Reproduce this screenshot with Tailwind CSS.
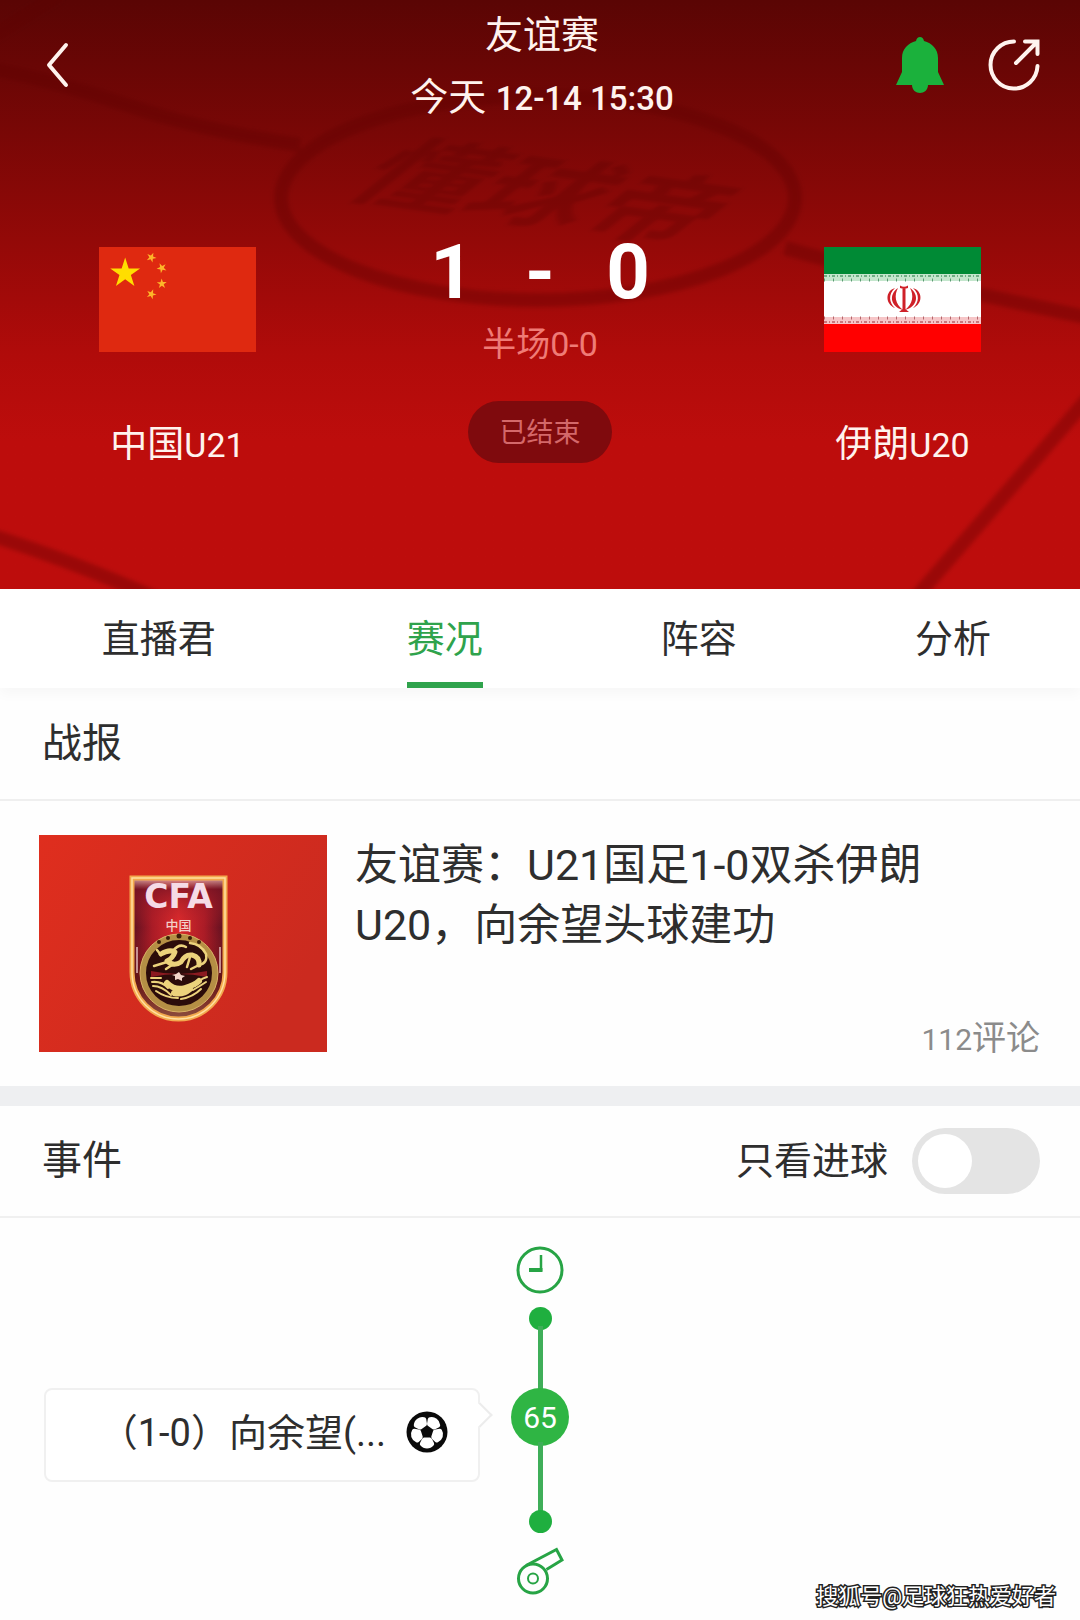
<!DOCTYPE html>
<html lang="zh-CN">
<head>
  <meta charset="UTF-8">
  <meta name="viewport" content="width=device-width, initial-scale=1.0">
  <title>友谊赛 中国U21 1-0 伊朗U20</title>
  <script src="https://cdn.jsdelivr.net/npm/@tailwindcss/browser@4"></script>
</head>
<body class="relative min-h-screen bg-[#fefefe] text-[#2e2e2e] font-[Roboto,'Noto_Sans_CJK_SC',sans-serif]">

  <header class="relative overflow-hidden bg-linear-to-b from-[#5a0504] via-[#b00b0a] via-60% to-[#bd0d0c] to-75% text-[#fff3ee] pb-[117px]">
    <!-- pitch lines -->
    <svg class="absolute inset-0 w-full h-full" viewBox="0 0 1080 589" preserveAspectRatio="none" aria-hidden="true">
      <defs>
        <filter id="soft"><feGaussianBlur stdDeviation="2"/></filter>
      </defs>
      <g fill="none" stroke="#5c0808" stroke-opacity=".36" stroke-width="14" filter="url(#soft)">
        <path d="M-10 38L60 -6" stroke-opacity=".25"/>
        <path d="M-10 68Q60 82 130 106T300 145"/>
        <ellipse cx="538" cy="198" rx="257" ry="102"/>
        <path d="M785 248C860 270 960 290 1090 318"/>
        <path d="M-10 535Q70 560 160 600"/>
        <path d="M1090 396L912 602"/>
      </g>
      <text transform="matrix(1 .14 -.75 .6 340 194)" font-size="116" font-weight="700" fill="#4d0707" fill-opacity=".25" filter="url(#soft)">懂球帝</text>
    </svg>

    <nav class="relative h-32 grid grid-cols-[1fr_auto_1fr] items-center pl-11 pr-10">
      <button type="button" aria-label="返回" class="justify-self-start">
        <svg class="w-7 h-12" viewBox="0 0 28 48" fill="none" stroke="currentColor" stroke-width="4" stroke-linecap="round" stroke-linejoin="round"><path d="M22 4L5 24L22 44"/></svg>
      </button>
      <div class="pt-1 text-center text-[38px] leading-[62px]">
        <h1>友谊赛</h1>
        <p>今天 <span class="text-[33px] font-medium">12-14 15:30</span></p>
      </div>
      <div class="justify-self-end flex items-center gap-11">
        <button type="button" aria-label="提醒" class="text-[#1bb13c]">
          <svg class="w-12 h-14" viewBox="0 0 48 56" fill="currentColor"><path d="M24 0c2 0 3.500 1.500 4 4c8 2 14 8 14 17v14l6 13H32c0 5-4 8-8 8s-8-3-8-8H0l6-13V21C6 12 12 6 20 4c.5-2.500 2-4 4-4z"/></svg>
        </button>
        <button type="button" aria-label="分享">
          <svg class="w-[52px] h-[52px]" viewBox="0 0 52 52" fill="none" stroke="currentColor" stroke-width="4" stroke-linecap="round"><path d="M26 2.500A23.500 23.500 0 1 0 49.500 27"/><path d="M28 24L49 3M37 2.500H49.500V15"/></svg>
        </button>
      </div>
    </nav>

    <section class="relative grid grid-cols-[1fr_370px_1fr] pt-[119px]">
      <div class="flex flex-col items-center gap-[66px]">
        <svg class="w-[157px] h-[105px]" viewBox="0 0 30 20" preserveAspectRatio="none" role="img" aria-label="中国">
          <defs><path id="star" d="M0 -1L.2245 -.309L.951 -.309L.363 .118L.588 .809L0 .382L-.588 .809L-.363 .118L-.951 -.309L-.2245 -.309Z"/></defs>
          <path fill="#df2910" d="M0 0h30v20H0z"/>
          <g fill="#ffde00">
            <use href="#star" transform="translate(5 5) scale(3)"/>
            <g fill="#fdb62a">
              <use href="#star" transform="translate(10 2) rotate(23)"/>
              <use href="#star" transform="translate(12 4) rotate(46)"/>
              <use href="#star" transform="translate(12 7) rotate(70)"/>
              <use href="#star" transform="translate(10 9) rotate(21)"/>
            </g>
          </g>
        </svg>
        <h2 class="text-[37px] leading-[54px]">中国<span class="text-[34px]">U21</span></h2>
      </div>

      <div class="flex flex-col items-center">
        <p class="flex justify-center items-center text-[76px] leading-[50px] font-bold text-white text-center">
          <span class="w-[88px]">1</span><span class="w-[88px]">-</span><span class="w-[88px]">0</span>
        </p>
        <p class="mt-[22px] text-[34px] leading-[50px] text-[#ef7b76]">半场0-0</p>
        <p class="mt-8 w-36 h-[62px] rounded-full bg-[#7f0a0d] text-[27px] leading-[64px] text-center text-[#d4686a]">已结束</p>
      </div>

      <div class="flex flex-col items-center gap-[66px]">
        <svg class="w-[157px] h-[105px]" viewBox="0 0 157 105" role="img" aria-label="伊朗">
          <path fill="#008a35" d="M0 0h157v28H0z"/>
          <path fill="#fff" d="M0 28h157v49H0z"/>
          <path fill="#f00" d="M0 77h157v28H0z"/>
          <path fill="#c4e6cd" d="M0 27h157v7H0z"/>
          <path fill="#f6c6c8" d="M0 70h157v7H0z"/>
          <g fill="none">
            <path stroke="#6fae84" stroke-width="2" stroke-dasharray="3 2 1 2" d="M0 29h157"/>
            <path stroke="#5b9a72" stroke-width="3" stroke-dasharray="1 8" d="M0 33h157"/>
            <path stroke="#c9777c" stroke-width="2" stroke-dasharray="3 2 1 2" d="M0 75h157"/>
            <path stroke="#b5666b" stroke-width="3" stroke-dasharray="1 8" d="M0 71h157"/>
          </g>
          <g fill="#cf2028">
            <path d="M78.500 41h3v22h-3zM76 38.500q4 2.500 8 0v2.500q-4 1.500-8 0zM75 65l5-4l5 4z"/>
            <path d="M74 41c-4 7-3 16 5 22c-12-3-15-15-5-22zM86 41c4 7 3 16-5 22c12-3 15-15 5-22z"/>
            <path d="M71 41c-7 6-6 15 0 20c-10-4-10-17 0-20zM89 41c7 6 6 15 0 20c10-4 10-17 0-20z"/>
          </g>
        </svg>
        <h2 class="text-[37px] leading-[54px]">伊朗<span class="text-[34px]">U20</span></h2>
      </div>
    </section>
  </header>

  <nav class="grid grid-cols-[5fr_4fr_4fr_4fr] justify-items-center bg-white text-[38px] leading-[56px] shadow-[0_6px_12px_rgba(0,0,0,0.03)]">
    <a href="#live" class="pt-[22px] pb-[15px] border-b-6 border-transparent">直播君</a>
    <a href="#match" aria-current="page" class="pt-[22px] pb-[15px] border-b-6 border-[#2fa34c] text-[#2fa34c]">赛况</a>
    <a href="#lineup" class="pt-[22px] pb-[15px] border-b-6 border-transparent">阵容</a>
    <a href="#analysis" class="pt-[22px] pb-[15px] border-b-6 border-transparent">分析</a>
  </nav>

  <main>
    <section>
      <h2 class="px-[42px] pt-[27px] pb-[26px] text-[40px] leading-[58px] border-b-2 border-[#efefef]">战报</h2>
      <a href="#report" class="flex gap-7 pl-[39px] pr-10 pt-[34px] pb-[34px]">
        <svg class="w-[288px] h-[217px] shrink-0" viewBox="0 0 288 217" role="img" aria-label="CFA 中国">
          <defs>
            <linearGradient id="bg" x1="0" x2="1" y2=".5"><stop offset="0" stop-color="#df2e1e"/><stop offset="1" stop-color="#cb2a1f"/></linearGradient>
            <linearGradient id="shield" x1="0" x2="1">
              <stop offset="0" stop-color="#5a1020"/><stop offset=".22" stop-color="#a91b26"/><stop offset=".5" stop-color="#dc2a2c"/><stop offset=".78" stop-color="#a91b26"/><stop offset="1" stop-color="#5a1020"/>
            </linearGradient>
            <linearGradient id="shade" x1="0" x2="0" y1="0" y2="1">
              <stop offset="0" stop-color="#f3c7c0" stop-opacity=".8"/><stop offset=".08" stop-color="#7a1424" stop-opacity=".7"/><stop offset=".35" stop-color="#c4242a" stop-opacity="0"/><stop offset=".7" stop-color="#5a140c" stop-opacity=".5"/><stop offset="1" stop-color="#8a5040"/>
            </linearGradient>
          </defs>
          <path fill="url(#bg)" d="M0 0h288v217H0z"/>
          <path fill="url(#shield)" d="M93 43h93v94a46.500 47 0 0 1-93 0z"/>
          <path fill="url(#shade)" stroke="#f3a94e" stroke-width="5" d="M93 43h93v94a46.500 47 0 0 1-93 0z"/>
          <path fill="none" stroke="#ffe0a0" stroke-width="1.500" d="M93 43h93v94a46.500 47 0 0 1-93 0z"/>
          <path fill="none" stroke="#e9c6c6" stroke-opacity=".7" stroke-width="2" d="M98 112v26M181 112v26"/>
          <text x="139.500" y="73" text-anchor="middle" font-family="DejaVu Sans, sans-serif" font-size="33" font-weight="700" fill="#f5dbe6">CFA</text>
          <text x="139.500" y="95" text-anchor="middle" font-size="13" font-weight="500" fill="#f3cfc8">中国</text>
          <circle cx="140" cy="138" r="36" fill="#2c0c0a" stroke="#b58f45" stroke-width="6"/>
          <circle cx="140" cy="138" r="39" fill="none" stroke="#d9b266" stroke-width="1"/>
          <g fill="#3a1c08"><circle cx="120" cy="107" r="2"/><circle cx="129" cy="103" r="2"/><circle cx="140" cy="101" r="2.500"/><circle cx="151" cy="103" r="2"/><circle cx="160" cy="107" r="2"/></g>
          <path fill="#8b1a20" d="M112 136q28 6 56 0v6q-28-6-56 0z"/>
          <!-- dragon -->
          <g fill="none" stroke="#ecd27c" stroke-linecap="round" stroke-linejoin="round">
            <path stroke-width="5" d="M122 119q8-5 14-2q-2 6-8 9q7 6 14 1q4-8 11-7q8 2 7 10"/>
            <path stroke-width="2.500" d="M160 130q9-2 7-11q-5-10-16-11M122 120l-4-5M128 127l-13 4M133 130l-6 4M151 122l-3 10M160 130l-8 4M134 116q6-8 13-4"/>
          </g>
          <!-- phoenix -->
          <g fill="none" stroke="#ecd27c" stroke-linecap="round" stroke-linejoin="round">
            <path stroke-width="6" d="M128 148q8 8 18 5q10-3 14-7M135 158q9 2 16-4"/>
            <path stroke-width="2" d="M112 143h10M113 147q10-1 16 6M114 151q9 0 18 9M117 156q10 7 22 7M168 142q-8 2-12 9M167 147q-6 4-13 8M162 154q-8 8-20 10"/>
          </g>
          <path fill="#f3d5c8" d="M140 137l2 3 4 1-3 2v3l-4-2-3 1 0-4-3-1 4-1z"/>
        </svg>
        <div class="flex flex-1 flex-col justify-between">
          <h3 class="text-[43px] leading-[60px]">友谊赛：U21国足1-0双杀伊朗U20，向余望头球建功</h3>
          <p class="text-right text-[34px] leading-[24px] text-[#8b8b8b]"><span class="text-[30px]">112</span>评论</p>
        </div>
      </a>
    </section>

    <section class="border-t-20 border-[#eeeff1]">
      <div class="flex items-center pl-[42px] pr-10 h-[112px] border-b-2 border-[#f0f0f0]">
        <h2 class="text-[40px] leading-[58px]">事件</h2>
        <label for="goals" class="ml-auto mr-6 text-[38px] leading-[58px]">只看进球</label>
        <input id="goals" type="checkbox" role="switch" class="appearance-none w-32 h-[66px] p-[6px] rounded-full bg-[#e4e4e4] checked:bg-[#2fb544] before:block before:w-[54px] before:h-[54px] before:rounded-full before:bg-white checked:before:translate-x-[62px]">
      </div>

      <div class="grid grid-cols-[1fr_58px_1fr] pt-7 pb-6">
        <!-- home side event -->
        <div class="relative mt-[142px] ml-11 mr-[31px] h-[94px] self-start flex items-start justify-end gap-5 pt-[21px] pr-[30px] rounded-lg border-2 border-[#f0f0f0] bg-white">
          <p class="text-[38px] leading-[44px] whitespace-nowrap">（1-0）向余望(...</p>
          <svg class="w-[42px] h-[42px] shrink-0" viewBox="0 0 42 42" role="img" aria-label="进球">
            <circle cx="21" cy="21" r="20.500" fill="#0a0a0a"/>
            <g fill="#fff">
              <path id="patch" d="M18 26.500h6q1 0 2 1.500l2 4q.5 1.500-.5 2.500q-2.500 3-6.500 3t-6.500-3q-1-1-.5-2.500l2-4q1-1.500 2-1.500z"/>
              <use href="#patch" transform="rotate(72 21 21)"/>
              <use href="#patch" transform="rotate(144 21 21)"/>
              <use href="#patch" transform="rotate(216 21 21)"/>
              <use href="#patch" transform="rotate(288 21 21)"/>
            </g>
          </svg>
          <span class="absolute -right-[11px] top-4 w-[18px] h-[18px] rotate-45 border-t-2 border-r-2 border-[#ececec] bg-white"></span>
        </div>

        <div class="flex flex-col items-center text-[#27a445]">
          <svg class="w-12 h-12" viewBox="0 0 48 48" fill="none" stroke="currentColor" stroke-width="3"><circle cx="24" cy="24" r="22"/><path d="M25 9v16" stroke-width="2.500"/><path d="M13 24h13.500" stroke-width="4"/></svg>
          <span class="mt-[13px] w-[23px] h-[23px] rounded-full bg-[#1faf3f]"></span>
          <span class="-mt-1 w-[5px] h-[66px] bg-[#3fae59]"></span>
          <span class="-mt-1 w-[58px] h-[58px] rounded-full bg-[#2fb544] text-white text-[30px] leading-[60px] text-center">65</span>
          <span class="-mt-1 w-[5px] h-[72px] bg-[#3fae59]"></span>
          <span class="-mt-1 w-[23px] h-[23px] rounded-full bg-[#1faf3f]"></span>
          <svg class="mt-[14px] w-12 h-12" viewBox="0 0 48 48" fill="none" stroke="currentColor" stroke-width="3"><circle cx="17" cy="31.500" r="14.500"/><circle cx="17" cy="31.500" r="5" stroke-width="2"/><path d="M10 18.500L40.500 2.500L46 13L30.500 22.500"/></svg>
        </div>
      </div>
    </section>
  </main>

  <p class="absolute bottom-2 right-6 text-[22px] leading-[30px] text-white whitespace-nowrap [-webkit-text-stroke:3px_#222] [paint-order:stroke_fill]">搜狐号@足球狂热爱好者</p>
</body>
</html>
